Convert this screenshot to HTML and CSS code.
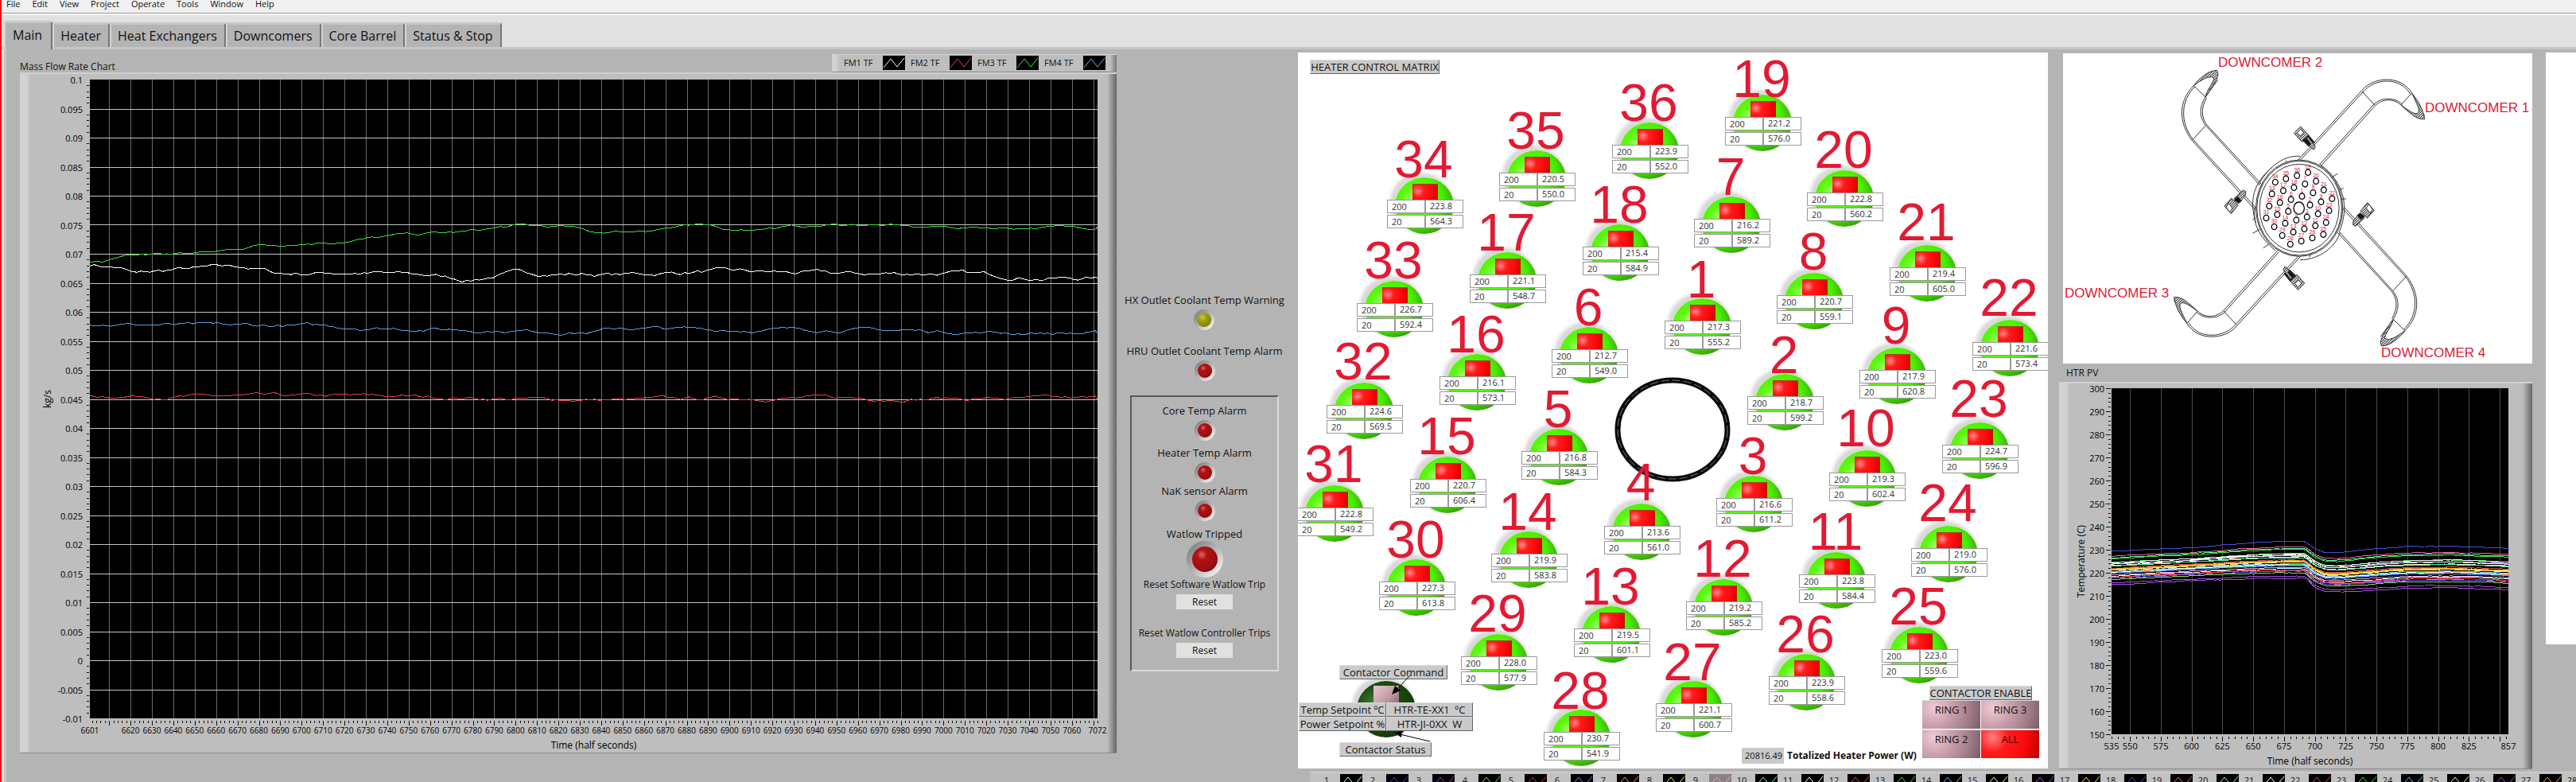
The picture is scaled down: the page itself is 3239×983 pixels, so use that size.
FILE: index.html
```html
<!DOCTYPE html>
<html lang="en">
<head>
<meta charset="utf-8">
<title>Flow loop control</title>
<link rel="stylesheet" href="styles.css">
</head>
<body>
<nav class="menu">
  <button>File</button><button>Edit</button><button>View</button><button>Project</button><button>Operate</button><button>Tools</button><button>Window</button><button>Help</button>
</nav>
<div class="tabs" role="tablist">
  <button class="tab active" role="tab" aria-selected="true">Main</button>
  <button class="tab" role="tab">Heater</button>
  <button class="tab" role="tab">Heat Exchangers</button>
  <button class="tab" role="tab">Downcomers</button>
  <button class="tab" role="tab">Core Barrel</button>
  <button class="tab" role="tab">Status &amp; Stop</button>
</div>
<main class="work">
  <section class="flow">
    <div class="flow-head">
      <h2 class="caption">Mass Flow Rate Chart</h2>
      <div class="legend" id="flow-legend"></div>
    </div>
    <div class="frame"><svg class="chart" id="flow-chart" role="img" aria-label="Mass flow rate"></svg></div>
  </section>

  <section class="alarms">
    <div class="alarm hx"><span>HX Outlet Coolant Temp Warning</span><i class="led yellow"></i></div>
    <div class="alarm hru"><span>HRU Outlet Coolant Temp Alarm</span><i class="led"></i></div>
    <div class="trip-box">
      <div class="alarm core"><span>Core Temp Alarm</span><i class="led"></i></div>
      <div class="alarm heater-temp"><span>Heater Temp Alarm</span><i class="led"></i></div>
      <div class="alarm nak"><span>NaK sensor Alarm</span><i class="led"></i></div>
      <div class="alarm watlow"><span>Watlow Tripped</span><i class="led big"></i></div>
      <div class="reset"><label for="reset-software">Reset Software Watlow Trip</label><button id="reset-software">Reset</button></div>
      <div class="reset"><label for="reset-controller">Reset Watlow Controller Trips</label><button id="reset-controller">Reset</button></div>
    </div>
  </section>

  <section class="right">
    <div class="right-top">
      <div class="matrix" id="matrix">
        <svg class="core-ring" viewBox="0 0 146 134"><ellipse cx="73" cy="67" rx="69" ry="62" fill="none" stroke="#0a0a0a" stroke-width="7"/><ellipse cx="73" cy="67" rx="69" ry="62" fill="none" stroke="#777" stroke-width="1" stroke-dasharray="10 4"/></svg>
        <h2 class="tag matrix-title">HEATER CONTROL MATRIX</h2>
        <i class="globe key-globe"></i><i class="key-command"></i>
        <span class="tag key-a">Contactor Command</span>
        <div class="key-grid"><span class="tag">Temp Setpoint ºC</span><span class="tag">HTR-TE-XX1 &nbsp;ºC</span><span class="tag">Power Setpoint %</span><span class="tag">HTR-JI-0XX &nbsp;W</span></div>
        <span class="tag key-b">Contactor Status</span>
        <svg class="key-arrows" viewBox="0 0 60 100"><path d="M31 6 12 26M56 89 14 79" stroke="#000" fill="none"/><path d="M8 30 12 19 19 25ZM11 78 21 76 20 84Z"/></svg>
        <div class="enable">
          <span class="tag">CONTACTOR ENABLE</span>
          <div class="rings"><button>RING 1</button><button>RING 3</button><button>RING 2</button><button class="on">ALL</button></div>
        </div>
        <div class="total"><output id="total">20816.49</output><label for="total">Totalized Heater Power (W)</label></div>
      </div>
      <div class="side">
        <div class="downcomers">
          <svg id="vessel" viewBox="33 51 1404 1170" preserveAspectRatio="none">
            <defs><pattern id="hatch" width="6" height="6" patternUnits="userSpaceOnUse" patternTransform="rotate(40)"><rect width="6" height="6" fill="#ddd"/><path d="M0 0V6" stroke="#222" stroke-width="4"/></pattern></defs>
            <g class="arm" id="arm-a">
              <path d="M735 455 928 190C960 140 1045 130 1077 202L1115 288M805 475 968 247C990 222 1022 220 1044 246L1092 292M740 458 932 195C965 146 1040 137 1072 204M801 470 964 242C988 216 1024 216 1048 243M928 195 966 247M1075 203 1044 246"/>
              <path class="hatched" d="M1077 202C1097 232 1110 262 1115 299 1095 302 1080 288 1044 246 1068 268 1085 284 1096 276 1102 262 1090 240 1077 202Z"/>
            </g>
            <g class="arm" id="arm-b">
              <path d="M622 548 460 323C440 290 440 255 459 216L497 150M607 640 418 378C378 310 378 230 424 173L470 122M627 545 464 322C445 290 446 255 463 218M611 635 422 376C383 310 384 232 428 176M460 323 420 378M424 173 459 216"/>
              <path class="hatched" d="M424 173C440 146 468 116 493 115 502 130 495 152 459 216 462 190 485 160 484 145 474 132 450 148 424 173Z"/>
            </g>
            <use href="#arm-a" transform="rotate(180 740 635)"/>
            <use href="#arm-b" transform="rotate(180 740 635)"/>
            <g class="arm">
              <path d="M618 548C650 470 700 435 742 439M610 690C590 610 600 540 660 480M860 722C888 640 880 540 800 468M668 795C620 740 600 700 607 630M742 830C800 830 850 780 862 726M700 455 708 475M835 520 855 505M850 570 872 560M622 715 600 730M650 770 632 785M770 820 782 795M865 600 880 600M608 670 600 680"/>
              <ellipse cx="740" cy="635" rx="130" ry="182" fill="#fff"/><ellipse cx="740" cy="635" rx="127" ry="178"/><ellipse cx="740" cy="635" rx="119" ry="166"/>
            </g>
            <g class="arm" id="valve-a"><path class="hatched" d="M724 352 744 327 768 360 748 385Z"/><path d="M733 352 743 337 753 350 743 363Z" fill="#fff"/><path d="M750 380 768 360 786 388 768 402Z" fill="#111"/><path class="hatched" d="M766 366 788 402 784 414 778 411 758 378Z"/><path d="M762 372 775 394 768 398 755 380Z" fill="#111"/></g>
            <g class="arm" id="valve-b"><path class="hatched" d="M516 627 537 597 557 624 536 656Z"/><path d="M521 630 529 617 540 636 531 650Z" fill="#fff"/><path class="hatched" d="M545 598 572 567 580 573 578 588 558 618Z"/><path d="M545 604 556 592 567 608 557 616Z" fill="#111"/></g>
            <use href="#valve-a" transform="rotate(180 740 635)"/><use href="#valve-b" transform="rotate(180 740 635)"/>
            <g id="tubes"></g>
          </svg>
          <div id="tube-labels"></div>
          <span class="dc dc1">DOWNCOMER 1</span><span class="dc dc2">DOWNCOMER 2</span><span class="dc dc3">DOWNCOMER 3</span><span class="dc dc4">DOWNCOMER 4</span>
        </div>
        <h2 class="caption htr-caption">HTR PV</h2>
        <div class="frame"><svg class="chart" id="htr-chart" role="img" aria-label="Heater temperatures"></svg></div>
      </div>
      <div class="blank"></div>
    </div>
    <div class="strip" id="strip"></div>
  </section>
</main>
<script src="app.js"></script>
</body>
</html>
```
FILE: styles.css
```css
* { box-sizing: border-box; }
body { margin: 0; height: 100vh; display: flex; flex-direction: column; overflow: hidden; background: #b4b4b4; border-left: 2px solid #f00; font: 12px/16px "Open Sans", "Noto Sans", sans-serif; color: #111; }
button { font: inherit; color: inherit; border: 0; padding: 0; }
h2 { margin: 0; font: inherit; }

.menu { flex: none; display: flex; gap: 15px; height: 17px; padding-left: 6px; background: #f0f0f0; border-bottom: 1px solid #999; font-size: 11px; line-height: 10px; }
.menu button { background: none; height: 10px; }
.tabs { flex: none; display: flex; align-items: flex-end; height: 45px; padding-left: 3px; background: linear-gradient(#fafafa 2px, #e1e1e1 2px 42px, #c6c6c6 42px); font-size: 16px; line-height: 22px; }
.tab { height: 31px; margin-bottom: 3px; padding: 0 9px 0 8px; background: #b4b4b4; border-top: 3px solid #c8c8c8; border-left: 2px solid #d4d4d4; border-right: 2px solid #777; border-radius: 2px 3px 0 0; }
.tab.active { height: 36px; margin-bottom: 0; padding: 0 11px 4px 9px; }

.work { flex: 1; min-height: 0; display: grid; grid-template-columns: minmax(0, 1fr) 228px 1607px; border-left: 3px solid #e1e1e1; }
.flow { display: flex; flex-direction: column; padding: 0 0 36px 17px; border-left: 3px solid #c8c8c8; min-width: 0; }
.flow-head { display: flex; justify-content: space-between; align-items: flex-end; height: 29px; }
.caption { font-size: 12px; line-height: 14px; }
.frame { position: relative; flex: 1; min-height: 0; background: linear-gradient(90deg, #d2d2d2 9px, #bebebe 13px, #bebebe calc(100% - 12px), #666); border-top: 2px solid #d0d0d0; border-bottom: 1px solid #888; }
.chart { display: block; width: 100%; height: 100%; overflow: visible; font-size: 11px; }
.chart .title { font-size: 12px; }
.chart .dense { font-size: 10px; }
.legend { display: flex; height: 23px; gap: 7px; padding: 1px 14px 2px 15px; background: linear-gradient(90deg, #d2d2d2 5px, #bebebe 10px, #bebebe calc(100% - 8px), #777); border-top: 1px solid #d0d0d0; border-bottom: 1px solid #888; font-size: 11px; line-height: 18px; }
.legend span { display: flex; justify-content: space-between; width: 77px; }
.swatch { width: 28px; height: 18px; background: #000; }

.alarms { display: flex; flex-direction: column; align-items: center; padding: 306px 7px 0 0; font-size: 13px; line-height: 18px; white-space: nowrap; }
.alarm { display: flex; flex-direction: column; align-items: center; gap: 3px; }
.hru { margin-top: 17px; }
.trip-box { width: 187px; height: 347px; margin-top: 18px; padding-top: 8px; border: 2px solid; border-color: #5a5a5a #dadada #dadada #5a5a5a; }
.heater-temp { margin-top: 6px; }
.nak { margin-top: 1px; }
.watlow { margin-top: 7px; gap: 0; }
.led { width: 26px; height: 26px; border: 4px solid transparent; border-radius: 50%; background: radial-gradient(circle at 38% 32%, #d66 0, #b01216 22%, #a00d10 60%, #600) padding-box, linear-gradient(135deg, #808080 10%, #b4b4b4 50%, #f4f4f4 90%) border-box; }
.led.yellow { background: radial-gradient(circle at 38% 32%, #cccc50 0, #a0a010 30%, #8c8c05 60%, #555500) padding-box, linear-gradient(135deg, #808080 10%, #b4b4b4 50%, #f4f4f4 90%) border-box; }
.led.big { width: 46px; height: 46px; border-width: 7px; }
.reset { display: flex; flex-direction: column; align-items: center; gap: 3px; font-size: 12px; margin-bottom: 21px; }
.reset button { width: 71px; height: 19px; background: #e1e1e1; line-height: 18px; }

.right { display: flex; flex-direction: column; min-height: 0; padding-top: 4px; }
.right-top { flex: none; display: flex; height: 901px; }
.matrix { position: relative; width: 943px; height: 900px; background: #fff; overflow-x: clip; }
.tag { background: #cacaca; border: 1px solid; border-color: #ddd #666 #666 #ddd; text-align: center; font-size: 13px; line-height: 16px; white-space: nowrap; }
.matrix-title { position: absolute; left: 15px; top: 9px; width: 163px; }
.core-ring { position: absolute; left: 398px; top: 407px; width: 146px; height: 134px; }
.unit { position: absolute; width: 96px; }
.number { position: absolute; left: -4px; width: 100px; text-align: center; font: 66px/74px "Liberation Sans", Arial, sans-serif; color: #e21a33; }
.globe { position: absolute; left: 10px; top: -28px; width: 74px; height: 71px; border-radius: 50%; background: radial-gradient(ellipse at 32% 38%, #a8ff80 0, #5cf80e 22%, #4cf000 50%, #38b000 72%, #1c6a08 100%); box-shadow: -4px -4px 4px 2px #d8d8d8; }
.command { position: absolute; left: 32px; top: -20px; width: 32px; height: 22px; border-top: 1px solid #a64000; background: radial-gradient(circle at 22% 38%, #ff8a8a 0, #ff1a1a 28%, #f80808 65%, #c80000); }
.values { position: relative; display: grid; grid-template-columns: 1fr 1fr; row-gap: 2px; }
.values input, .values output { width: 100%; height: 17px; padding: 0 0 0 5px; margin: 0; background: #fff; border: 1px solid #999; border-radius: 0; font: 11px/14px "Open Sans", sans-serif; color: #333; }
.key-globe { left: 74px; top: 790px; background: radial-gradient(ellipse at 32% 38%, #4a7a3a 0, #1e5010 30%, #143c08 70%, #0a2404); }
.key-command { position: absolute; left: 95px; top: 796px; width: 32px; height: 24px; background: linear-gradient(135deg, #e8c8d0, #c09aa4 60%, #8c6670); }
.key-a { position: absolute; left: 52px; top: 770px; width: 136px; }
.key-b { position: absolute; left: 52px; top: 867px; width: 116px; }
.key-grid { position: absolute; left: 1px; top: 817px; display: grid; grid-template-columns: 110px 109px; }
.key-arrows { position: absolute; left: 110px; top: 777px; width: 60px; height: 100px; }
.enable { position: absolute; left: 785px; top: 796px; width: 147px; display: flex; flex-direction: column; align-items: center; }
.rings { width: 100%; display: grid; grid-template-columns: 1fr 1fr; grid-auto-rows: 36px; gap: 1px; }
.rings button { padding-bottom: 14px; background: radial-gradient(circle at 20% 25%, #f0ccd6 0, #caa0ac 35%, #a88490 65%, #7c5c66); font-size: 13px; border-top: 1px solid #ddd; }
.rings .on { background: radial-gradient(circle at 20% 25%, #ff8080 0, #ff1c1c 30%, #fa0a0a 65%, #b80000); color: #500; }
.total { position: absolute; left: 558px; top: 874px; display: flex; gap: 4px; line-height: 20px; }
.total output { width: 53px; background: #cacaca; text-align: right; padding-right: 2px; font-size: 11px; }
.total label { font-weight: bold; font-size: 12px; white-space: nowrap; }

.side { display: flex; flex-direction: column; width: 595px; margin-left: 14px; padding-top: 1px; }
.downcomers { position: relative; flex: none; height: 390px; margin-left: 5px; background: #fff; }
.downcomers svg { display: block; width: 100%; height: 100%; }
.arm { fill: none; stroke: #333; stroke-width: 1; }
.arm path, .arm ellipse, #tubes ellipse { vector-effect: non-scaling-stroke; }
.hatched { fill: url(#hatch); }
#tubes { fill: #fff; stroke: #000; stroke-width: 1.3; }
.dc { position: absolute; font: 17px/20px "Liberation Sans", Arial, sans-serif; color: #dc2038; white-space: nowrap; }
.dc1 { left: 455px; top: 59px; }
.dc2 { left: 195px; top: 2px; }
.dc3 { left: 2px; top: 292px; }
.dc4 { left: 400px; top: 367px; }
.tube-no { position: absolute; width: 12px; margin: -11px 0 0 -6px; text-align: center; font: 7px/8px "Liberation Sans", Arial, sans-serif; color: #dc2038; }
.htr-caption { padding: 4px 0 0 9px; height: 23px; line-height: 16px; }
.blank { flex: 1; margin-left: 17px; height: 744px; background: #fff; }
.strip { display: flex; flex: none; gap: 1px; margin: 3px 0 0 15px; padding: 2px 0 2px 10px; background: #c2c2c2; border-top: 1px solid #d4d4d4; overflow: hidden; line-height: 16px; font-size: 11px; }
.strip span { flex: none; display: flex; width: 57px; }
.strip b { width: 28px; font-weight: normal; text-align: center; padding-right: 6px; }
.strip .picked { background: #8a8286; }
```
FILE: app.js
```js
// number, left, top, number baseline, temperature, power
const heaters = [
  [1,461,337,307,'217.3','555.2'],[2,565,432,402,'218.7','599.2'],[3,526,560,529,'216.6','611.2'],[4,385,595,562,'213.6','561.0'],
  [5,281,501,470,'216.8','584.3'],[6,319,373,342,'212.7','549.0'],[7,498,209,178,'216.2','589.2'],[8,602,305,272,'220.7','559.1'],
  [9,706,399,365,'217.9','620.8'],[10,668,528,494,'219.3','602.4'],[11,630,656,624,'223.8','584.4'],[12,488,690,658,'219.2','585.2'],
  [13,347,724,693,'219.5','601.1'],[14,243,630,599,'219.9','583.8'],[15,141,536,504,'220.7','606.4'],[16,178,407,376,'216.1','573.1'],
  [17,216,279,248,'221.1','548.7'],[18,358,244,213,'215.4','584.9'],[19,537,81,55,'221.2','576.0'],[20,640,176,144,'222.8','560.2'],
  [21,744,270,235,'219.4','605.0'],[22,848,364,330,'221.6','573.4'],[23,810,493,457,'224.7','596.9'],[24,771,623,588,'219.0','576.0'],
  [25,734,750,718,'223.0','559.6'],[26,592,784,753,'223.9','558.6'],[27,450,818,788,'221.1','600.7'],[28,309,854,824,'230.7','541.9'],
  [29,205,759,727,'228.0','577.9'],[30,102,665,634,'227.3','613.8'],[31,-1,572,539,'222.8','549.2'],[32,36,443,410,'224.6','569.5'],
  [33,74,315,283,'226.7','592.4'],[34,112,185,156,'223.8','564.3'],[35,253,151,120,'220.5','550.0'],[36,395,116,85,'223.9','552.0']
];
const matrix = document.getElementById('matrix');
heaters.forEach(([n, x, y, base, temp, power]) => {
  const u = document.createElement('div');
  u.className = 'unit';
  u.style.left = x + 'px';
  u.style.top = y + 'px';
  u.innerHTML = `<i class="globe"></i><i class="command"></i><span class="number" style="top:${base - y - 59}px">${n}</span>
    <div class="values"><input aria-label="Heater ${n} temperature setpoint" value="200"><output>${temp}</output><input aria-label="Heater ${n} power setpoint" value="20"><output>${power}</output></div>`;
  matrix.append(u);
});

const palette = ['#d8ffff','#3c46d0','#a03ce0','#78e03c','#e02828','#b070e0','#ffa03c','#f0f050','#f0a0c8','#78f0e0','#ffffff','#e05046','#3cdc50','#6eb4f0','#f0f08c','#a050dc','#ffd83c','#4650d8','#f05aa0','#8cf0dc','#ffffff','#e04646','#3ce646','#64b4e6','#f0f0a0','#a050d2','#ffa028','#4650d8','#28e678','#f05aa0','#50ffb0','#ffffff','#3cdc28','#dcaaff','#ffe628','#dcffff'];
const swatch = (c, cls) => `<svg class="swatch ${cls || ''}" viewBox="0 0 28 18"><path d="M1 15 10 4 18 14 27 3" fill="none" stroke="${c}"/></svg>`;
document.getElementById('flow-legend').innerHTML =
  [['FM1 TF','#fff'],['FM2 TF','#e64646'],['FM3 TF','#46e646'],['FM4 TF','#6eb4e6']].map(([t, c]) => `<span>${t}${swatch(c)}</span>`).join('');
document.getElementById('strip').innerHTML =
  heaters.slice(0, 28).map(([n]) => `<span><b>${n}</b>${swatch(palette[n - 1], n === 9 ? 'picked' : '')}</span>`).join('');

const tubes = [[748,590],[772,623],[763,668],[731,680],[707,647],[715,602],[757,544],[781,577],[805,611],[796,656],[788,701],[755,713],[722,725],[698,692],[674,659],[682,614],[692,569],[724,557],[766,500],[790,533],[813,566],[838,599],[829,644],[820,689],[812,734],[779,747],[746,759],[713,771],[689,738],[665,705],[641,672],[650,627],[658,581],[668,537],[700,524],[733,512]];
document.getElementById('tubes').innerHTML = '<ellipse cx="739" cy="635" rx="16" ry="23"/>' +
  tubes.map(([x, y]) => `<ellipse cx="${x}" cy="${y}" rx="8" ry="11"/>`).join('');
document.getElementById('tube-labels').innerHTML =
  tubes.map(([x, y], i) => `<span class="tube-no" style="left:${((x - 33) / 14.04).toFixed(2)}%;top:${((y - 51) / 11.7).toFixed(2)}%">${i + 1}</span>`).join('');

function interp(points, x) {
  for (let i = 1; i < points.length; i++) {
    const [x0, y0] = points[i - 1], [x1, y1] = points[i];
    if (x <= x1) return y0 + (y1 - y0) * (x - x0) / (x1 - x0);
  }
  return points[points.length - 1][1];
}
let seed = 7;
const rand = () => (seed = (seed * 16807) % 2147483647) / 2147483647 - 0.5;

function draw(id, o) {
  const svg = document.getElementById(id);
  const W = svg.clientWidth, H = svg.clientHeight;
  const L = o.left, T = o.top, R = W - o.right, B = H - o.bottom;
  const X = v => L + (v - o.x0) / (o.x1 - o.x0) * (R - L);
  const Y = v => B - (v - o.y0) / (o.y1 - o.y0) * (B - T);
  const line = (x1, y1, x2, y2, c) => `<path d="M${Math.round(x1)} ${Math.round(y1)}L${Math.round(x2)} ${Math.round(y2)}" stroke="${c}" shape-rendering="crispEdges"/>`;
  let s = `<rect x="${L}" y="${T}" width="${R - L}" height="${B - T}" fill="#000"/>`;
  o.xGrid.forEach(v => { s += line(X(v), T, X(v), B, o.vColor) + line(X(v), B + 3, X(v), B + 9, '#111'); });
  for (let v = o.xMinor * Math.ceil(o.x0 / o.xMinor); v <= o.x1; v += o.xMinor) s += line(X(v), B + 3, X(v), B + 6, '#111');
  o.xLabels.forEach(v => { s += `<text class="${o.xClass}" x="${X(v)}" y="${B + 19}" text-anchor="middle">${v}</text>`; });
  for (let i = 0; i <= o.ySteps; i++) {
    const v = o.y0 + i * o.yStep;
    s += `<text x="${L - 9}" y="${Y(v) + 5}" text-anchor="end">${+v.toFixed(3)}</text>`;
    if (o.hGrid && i && i < o.ySteps) s += line(L, Y(v), R, Y(v), '#c4c4c4');
    if (!o.hGrid) s += line(L - 7, Y(v), L - 1, Y(v), '#111');
    if (i < o.ySteps) for (let k = 1; k < 5; k++) s += line(L - 4, Y(v + k * o.yStep / 5), L - 1, Y(v + k * o.yStep / 5), '#111');
  }
  seed = 7;
  o.series.forEach(({ points, color, noise }) => {
    let d = '', wander = 0;
    for (let x = o.x0; x <= o.x1; x += 2) {
      wander = wander * 0.8 + rand() * noise;
      d += (d ? 'L' : 'M') + X(x).toFixed(1) + ' ' + Y(interp(points, x) + wander).toFixed(1);
    }
    s += `<path d="${d}L${R} ${Y(interp(points, o.x1)).toFixed(1)}" fill="none" stroke="${color}" shape-rendering="crispEdges"/>`;
  });
  s += `<text class="title" x="${(L + R) / 2}" y="${B + 38}" text-anchor="middle">Time (half seconds)</text>`;
  s += `<text class="title" transform="translate(${o.yTitleX} ${(T + B) / 2}) rotate(-90)" text-anchor="middle">${o.yTitle}</text>`;
  svg.innerHTML = s;
}
const range = (a, b, step) => Array.from({ length: Math.floor((b - a) / step) + 1 }, (_, i) => a + i * step);

const flow = {
  left: 88, top: 7, right: 24, bottom: 43, x0: 6601, x1: 7072, y0: -0.01, y1: 0.1, yStep: 0.005, ySteps: 22, hGrid: true, vColor: '#6a6a6a',
  xGrid: range(6610, 7070, 10), xMinor: 2, xLabels: [6601, ...range(6620, 7060, 10), 7072], xClass: 'dense', yTitle: 'kg/s', yTitleX: 39,
  series: [
    { color: '#fff', noise: 0.0006, points: [[6601,.0682],[6615,.0676],[6622,.0665],[6640,.0672],[6672,.0678],[6690,.0666],[6720,.0668],[6760,.0663],[6778,.0655],[6800,.0667],[6850,.0664],[6890,.067],[6960,.0665],[7000,.0667],[7050,.0658],[7072,.0658]] },
    { color: '#e63c50', noise: 0.0005, points: [[6601,.0456],[6660,.0454],[6740,.0455],[6800,.045],[6850,.0448],[6910,.0452],[7072,.045]] },
    { color: '#3cdc3c', noise: 0.0004, points: [[6601,.0688],[6625,.0698],[6660,.0703],[6680,.0715],[6720,.0722],[6750,.0733],[6775,.0737],[6800,.0748],[6824,.0746],[6836,.0737],[6855,.0739],[6875,.0747],[6893,.0747],[6900,.0742],[6935,.0747],[6960,.0751],[6985,.0746],[7030,.0745],[7072,.0746]] },
    { color: '#5a9cdc', noise: 0.0005, points: [[6601,.0579],[6660,.0576],[6700,.0576],[6740,.0572],[6835,.0565],[6850,.0572],[6900,.0569],[6950,.057],[7030,.0564],[7072,.0563]] }
  ]
};
const lineColors = { 4: '#a050dc', 6: '#a050dc', 18: '#82e646', 16: '#4650d8', 7: '#f05aa0', 28: '#4650dc', 29: '#f05aa0', 30: '#50f0a0', 33: '#3cdc28', 36: '#fff' };
const htr = {
  left: 66, top: 6, right: 30, bottom: 43, x0: 535, x1: 857, y0: 150, y1: 300, yStep: 10, ySteps: 15, hGrid: false, vColor: '#4a4a4a',
  xGrid: range(550, 850, 25), xMinor: 5, xLabels: [535, ...range(550, 825, 25), 857], xClass: 'normal', yTitle: 'Temperature (C)', yTitleX: 32,
  series: heaters.map(h => {
    const v = +h[4], k = (v - 219) * 0.2;
    return { color: lineColors[h[0]] || palette[h[0] - 1], noise: 0.2, points: [[535, v + .9 - k],[600, v + 2.6 - k],[650, v + 3.9 - k * .7],[675, v + 4.2 - k * .6],[692, v + 4.2 - k * .6],[700, v + .6 - k * .3],[708, v - 1.2 - k * .3],[718, v - 1.4 - k * .3],[750, v - .2],[775, v + .6],[810, v + .9],[857, v]] };
  })
};
function render() { draw('flow-chart', flow); draw('htr-chart', htr); }
render();
window.addEventListener('resize', render);
```
